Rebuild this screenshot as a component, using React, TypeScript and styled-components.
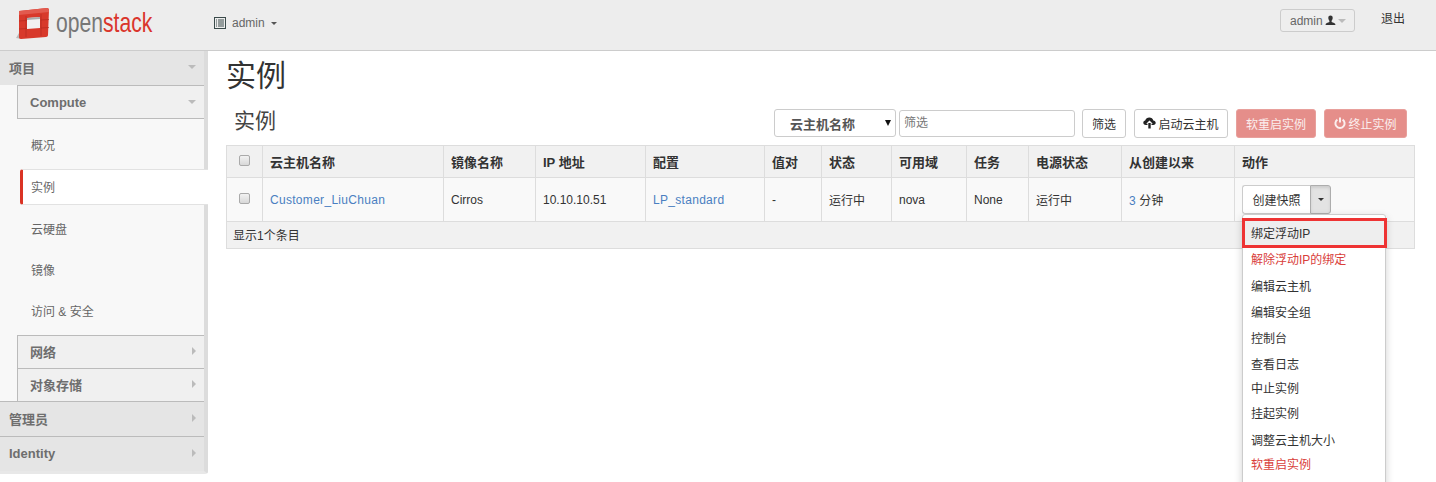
import React from 'react';
import styled, { createGlobalStyle } from 'styled-components';

const GlobalStyle = createGlobalStyle`
  html, body {
    margin: 0;
    height: 482px;
    overflow: hidden;
    background: #fff;
    font-family: 'Liberation Sans', 'Noto Sans CJK SC', sans-serif;
    font-size: 12px;
    color: #333;
  }
`;

const Page = styled.div`
  width: 1436px;
  height: 482px;
  overflow: hidden;
`;

const TopBar = styled.header`
  height: 50px;
  box-sizing: content-box;
  background: #ededed;
  border-bottom: 1px solid #ccc;
  display: flex;
  align-items: flex-start;
`;

const Logo = styled.div`
  display: flex;
  align-items: center;
  width: 214px;
  height: 46px;
  padding-left: 16px;
  box-sizing: border-box;
  gap: 6px;
`;

const LogoText = styled.span`
  font-size: 28px;
  color: #777;
  display: inline-block;
  width: 96px;
  white-space: nowrap;
  transform: scaleX(0.755);
  transform-origin: left center;
  span {
    color: #da352b;
  }
`;

const ProjectMenu = styled.div`
  display: flex;
  align-items: center;
  height: 46px;
  gap: 6px;
  color: #666;
  font-size: 12px;
  flex: 1;
`;

const Caret = styled.span<{ $color?: string; $size?: number }>`
  display: inline-block;
  width: 0;
  height: 0;
  border-left: ${({ $size }) => $size || 3}px solid transparent;
  border-right: ${({ $size }) => $size || 3}px solid transparent;
  border-top: ${({ $size }) => $size || 3}px solid ${({ $color }) => $color || '#555'};
`;

const UserButton = styled.div`
  width: 75px;
  height: 23px;
  box-sizing: border-box;
  margin-top: 9px;
  border: 1px solid #ccc;
  border-radius: 3px;
  background: #eee;
  display: flex;
  align-items: center;
  padding-left: 9px;
  gap: 2px;
  color: #666;
`;

const Logout = styled.a`
  width: 81px;
  padding: 9px 0 0 26px;
  box-sizing: border-box;
  color: #333;
  font-size: 12px;
`;

const Body = styled.div`
  display: flex;
  align-items: flex-start;
`;

const Sidebar = styled.aside`
  width: 208px;
  height: 423px;
  box-sizing: border-box;
  flex: none;
  border-right: 4px solid #dcdcdc;
  border-bottom: 3px solid #e8e8e8;
  border-bottom-right-radius: 3px;
  background: #f8f8f8;
`;

const PanelHeader = styled.div<{ $h: number; $top?: boolean }>`
  height: ${({ $h }) => $h}px;
  box-sizing: border-box;
  display: flex;
  align-items: center;
  justify-content: space-between;
  padding: 0 8px 2px 9px;
  background: #e5e5e5;
  font-size: 13px;
  font-weight: bold;
  color: #6e6e6e;
  border-top: ${({ $top }) => ($top ? '1px solid #bbb' : 'none')};
`;

const SubPanel = styled.div`
  margin-left: 17px;
`;

const SubHeader = styled.div<{ $h: number }>`
  height: ${({ $h }) => $h}px;
  box-sizing: border-box;
  display: flex;
  align-items: center;
  justify-content: space-between;
  padding: 0 8px 2px 12px;
  background: #f0f0f0;
  border-left: 1px solid #bbb;
  border-top: 1px solid #bbb;
  font-size: 13px;
  font-weight: bold;
  color: #6e6e6e;
`;

const SubHeaderOpen = styled(SubHeader)`
  padding-bottom: 0;
  border-bottom: 1px solid #bbb;
`;

const NavList = styled.ul`
  list-style: none;
  margin: 0;
  padding: 2px 0 3px;
`;

const NavItem = styled.li<{ $h: number; $active?: boolean }>`
  height: ${({ $h }) => $h}px;
  box-sizing: border-box;
  display: flex;
  align-items: center;
  padding: 0 0 2px 31px;
  color: #666;
  font-size: 12px;
  ${({ $active }) =>
    $active &&
    `
    margin: 0 -4px 4px 20px;
    padding-left: 8px;
    background: #fff;
    border-left: 3px solid #da3324;
    border-top: 1px solid #e2e2e2;
    border-bottom: 1px solid #e2e2e2;
    border-radius: 3px 0 0 3px;
    position: relative;
  `}
`;

const ArrowRight = styled.span`
  width: 0;
  height: 0;
  border-top: 4px solid transparent;
  border-bottom: 4px solid transparent;
  border-left: 4px solid #bbb;
`;

const Main = styled.main`
  flex: 1;
  padding: 0 21px 0 18px;
  min-width: 0;
`;

const Title = styled.h1`
  margin: 0;
  height: 48px;
  font-size: 30px;
  font-weight: normal;
  line-height: 50px;
  color: #333;
`;

const TableBar = styled.div`
  height: 46px;
  box-sizing: border-box;
  display: flex;
  align-items: center;
  padding: 2px 0 0 8px;
`;

const TableTitle = styled.h3`
  margin: 0 auto 8px 0;
  font-size: 21px;
  font-weight: normal;
  color: #444;
`;

const FilterSelect = styled.div`
  width: 122px;
  height: 28px;
  box-sizing: border-box;
  margin-right: 3px;
  border: 1px solid #ccc;
  border-radius: 3px;
  display: flex;
  align-items: center;
  justify-content: space-between;
  padding: 0 4px 0 15px;
  color: #555;
  font-size: 13px;
  font-weight: bold;
  background: #fff;
`;

const SelectArrow = styled.span`
  width: 0;
  height: 0;
  border-left: 3px solid transparent;
  border-right: 3px solid transparent;
  border-top: 6px solid #111;
`;

const FilterInput = styled.input`
  width: 176px;
  height: 27px;
  box-sizing: border-box;
  border: 1px solid #ccc;
  border-radius: 3px;
  padding: 0 4px;
  margin-right: 7px;
  font: inherit;
  &::placeholder {
    color: #777;
    opacity: 1;
  }
`;

const Button = styled.button<{ $danger?: boolean; $w: number; $mr?: number }>`
  width: ${({ $w }) => $w}px;
  height: 29px;
  box-sizing: border-box;
  margin-right: ${({ $mr }) => $mr || 0}px;
  border: 1px solid ${({ $danger }) => ($danger ? '#e8a09c' : '#ccc')};
  border-radius: 3px;
  background: ${({ $danger }) => ($danger ? '#e58e8a' : '#fff')};
  color: ${({ $danger }) => ($danger ? '#fbeeee' : '#333')};
  font: inherit;
  padding: 0;
  display: inline-flex;
  align-items: center;
  justify-content: center;
  gap: 2px;
`;

const Table = styled.table`
  width: 1188px;
  table-layout: fixed;
  border-collapse: collapse;
  background: #f9f9f9;
  th, td {
    border: 1px solid #ddd;
    padding: 0 7px;
    text-align: left;
    font-size: 12px;
    white-space: nowrap;
  }
  th {
    height: 32px;
    box-sizing: border-box;
    background: #f1f1f1;
    color: #333;
    font-size: 13px;
  }
  td {
    height: 44px;
    box-sizing: border-box;
    color: #333;
  }
  tfoot td {
    height: 27px;
    padding: 0 6px 2px;
    background: #f1f1f1;
  }
`;

const Check = styled.span`
  display: block;
  width: 11px;
  height: 11px;
  box-sizing: border-box;
  margin: -3px auto 0 5px;
  border: 1px solid #aaa;
  border-radius: 2px;
  background: linear-gradient(#f2f2f2, #d8d8d8);
`;

const TableLink = styled.a`
  color: #4a7fc1;
  letter-spacing: 0.3px;
`;

const ActionCell = styled.div`
  position: relative;
`;

const SplitButton = styled.div`
  display: flex;
  width: 89px;
  height: 29px;
`;

const SplitMain = styled.span`
  flex: 1;
  border: 1px solid #ccc;
  border-right: none;
  border-radius: 3px 0 0 3px;
  background: #fff;
  display: flex;
  align-items: center;
  justify-content: center;
`;

const SplitToggle = styled.span`
  width: 21px;
  box-sizing: border-box;
  border: 1px solid #adadad;
  border-radius: 0 3px 3px 0;
  background: #e3e3e3;
  box-shadow: inset 0 2px 3px rgba(0, 0, 0, 0.1);
  display: flex;
  align-items: center;
  justify-content: center;
`;

const Menu = styled.ul`
  position: absolute;
  top: 29px;
  left: 0;
  z-index: 5;
  width: 144px;
  box-sizing: border-box;
  list-style: none;
  margin: 0;
  padding: 3px 0 40px;
  background: #fff;
  border: 1px solid #ccc;
  border-radius: 3px;
  box-shadow: 0 3px 8px rgba(0, 0, 0, 0.18);
`;

const MenuItem = styled.li<{ $gap?: number; $danger?: boolean }>`
  height: 20px;
  margin-top: ${({ $gap }) => $gap || 0}px;
  display: flex;
  align-items: center;
  padding-left: 8px;
  color: ${({ $danger }) => ($danger ? '#d9403a' : '#333')};
`;

const HighlightItem = styled.li`
  height: 30px;
  margin: 0 -2px 0 -1px;
  box-sizing: border-box;
  display: flex;
  align-items: center;
  border: 3px solid #ee3333;
  padding: 0 0 2px 6px;
  background: #eee;
`;

const ListIcon = () => (
  <svg width="12" height="12" viewBox="0 0 12 12" fill="none" stroke="#3a4a4a" strokeWidth="1">
    <rect x="0.5" y="0.5" width="11" height="11" />
    <path d="M2 3h1M4 3h6M2 5h1M4 5h6M2 7h1M4 7h6M2 9h1M4 9h6" />
  </svg>
);

const LogoMark = () => (
  <svg width="34" height="31" viewBox="0 0 34 31">
    <path d="M0 30 6 20v11z" fill="#bbb" />
    <path d="M3 3 31 0c1.500 0 2 1 2 2l-1 25c0 1-1 2-2 2L5 31c-1.500 0-2-1-2-2z" fill="#d8392b" />
    <path d="M3 3 31 0c1.500 0 2 1 2 2v2L3 7z" fill="#e25a4e" />
    <path d="M10 8v21M25 6v22M3 13l8-.5M25 12l8-.5M3 21l8-.5M25 20l8-.5" stroke="#b52a20" strokeWidth="0.7" fill="none" />
    <path d="M11 10 24 9v11l-13 1z" fill="#f2f2f2" />
    <path d="M11 10 24 9v2l-13 1z" fill="#aaa" />
  </svg>
);

const UserIcon = () => (
  <svg width="11" height="11" viewBox="0 0 11 11" fill="#333">
    <path d="M3.300 2.800C3.300 1.300 4.300.5 5.500.5s2.200.8 2.200 2.300c0 1.300-.6 2.400-1.100 3v1.100c1.500.6 3.900 1 3.900 3.100H.5c0-2.100 2.400-2.500 3.900-3.100V5.800c-.5-.6-1.100-1.700-1.100-3z" />
  </svg>
);

const CloudUpIcon = () => (
  <svg width="13" height="12" viewBox="0 0 13 12" fill="#222">
    <path d="M3 8C1 8 .3 6.700.3 5.700.3 4.500 1.200 3.600 2.200 3.500 2.700 1.700 4.400.5 6.300.5c2 0 3.600 1.200 4 3 1.300.2 2.400 1.100 2.400 2.300C12.700 7.100 11.800 8 10.400 8H8.500V6.800h1.300L6.500 3.400 3.200 6.800h1.300V8z" />
    <rect x="5.300" y="6" width="2.400" height="5.500" />
  </svg>
);

const PowerIcon = () => (
  <svg width="12" height="12" viewBox="0 0 12 12" fill="none" stroke="#fbeeee" strokeWidth="2">
    <path d="M3.400 2.600a4.600 4.600 0 1 0 5.200 0" />
    <path d="M6 .5v5" />
  </svg>
);

const menuItems = [
  { label: '解除浮动IP的绑定', gap: 0, danger: true },
  { label: '编辑云主机', gap: 7 },
  { label: '编辑安全组', gap: 6 },
  { label: '控制台', gap: 6 },
  { label: '查看日志', gap: 6 },
  { label: '中止实例', gap: 4 },
  { label: '挂起实例', gap: 5 },
  { label: '调整云主机大小', gap: 7 },
  { label: '软重启实例', gap: 4, danger: true },
];

const App = () => (
  <Page>
    <GlobalStyle />
    <TopBar>
      <Logo>
        <LogoMark />
        <LogoText>
          open<span>stack</span>
        </LogoText>
      </Logo>
      <ProjectMenu>
        <ListIcon />
        admin
        <Caret />
      </ProjectMenu>
      <UserButton>
        admin
        <UserIcon />
        <Caret $color="#bbb" $size={4} />
      </UserButton>
      <Logout>退出</Logout>
    </TopBar>
    <Body>
      <Sidebar>
        <PanelHeader $h={34}>
          项目
          <Caret $color="#bbb" $size={4} />
        </PanelHeader>
        <SubPanel>
          <SubHeaderOpen $h={34}>
            Compute
            <Caret $color="#bbb" $size={4} />
          </SubHeaderOpen>
        </SubPanel>
        <NavList>
          <NavItem $h={48}>概况</NavItem>
          <NavItem $h={36} $active>实例</NavItem>
          <NavItem $h={41}>云硬盘</NavItem>
          <NavItem $h={41}>镜像</NavItem>
          <NavItem $h={41}>访问 &amp; 安全</NavItem>
        </NavList>
        <SubPanel>
          <SubHeader $h={33}>
            网络
            <ArrowRight />
          </SubHeader>
          <SubHeader $h={33}>
            对象存储
            <ArrowRight />
          </SubHeader>
        </SubPanel>
        <PanelHeader $h={35} $top>
          管理员
          <ArrowRight />
        </PanelHeader>
        <PanelHeader $h={35} $top>
          Identity
          <ArrowRight />
        </PanelHeader>
      </Sidebar>
      <Main>
        <Title>实例</Title>
        <TableBar>
          <TableTitle>实例</TableTitle>
          <FilterSelect>
            云主机名称
            <SelectArrow />
          </FilterSelect>
          <FilterInput placeholder="筛选" />
          <Button $w={44} $mr={8}>筛选</Button>
          <Button $w={94} $mr={8}>
            <CloudUpIcon />
            启动云主机
          </Button>
          <Button $w={80} $danger $mr={8}>软重启实例</Button>
          <Button $w={83} $danger $mr={8}>
            <PowerIcon />
            终止实例
          </Button>
        </TableBar>
        <Table>
          <colgroup>
            <col width="36" />
            <col width="181" />
            <col width="92" />
            <col width="110" />
            <col width="119" />
            <col width="57" />
            <col width="70" />
            <col width="75" />
            <col width="62" />
            <col width="93" />
            <col width="113" />
            <col width="180" />
          </colgroup>
          <thead>
            <tr>
              <th><Check /></th>
              <th>云主机名称</th>
              <th>镜像名称</th>
              <th>IP 地址</th>
              <th>配置</th>
              <th>值对</th>
              <th>状态</th>
              <th>可用域</th>
              <th>任务</th>
              <th>电源状态</th>
              <th>从创建以来</th>
              <th>动作</th>
            </tr>
          </thead>
          <tbody>
            <tr>
              <td><Check /></td>
              <td><TableLink>Customer_LiuChuan</TableLink></td>
              <td>Cirros</td>
              <td>10.10.10.51</td>
              <td><TableLink>LP_standard</TableLink></td>
              <td>-</td>
              <td>运行中</td>
              <td>nova</td>
              <td>None</td>
              <td>运行中</td>
              <td><TableLink>3</TableLink> 分钟</td>
              <td>
                <ActionCell>
                  <SplitButton>
                    <SplitMain>创建快照</SplitMain>
                    <SplitToggle><Caret $color="#333" /></SplitToggle>
                  </SplitButton>
                  <Menu>
                    <HighlightItem>绑定浮动IP</HighlightItem>
                    {menuItems.map((item) => (
                      <MenuItem key={item.label} $gap={item.gap} $danger={item.danger}>
                        {item.label}
                      </MenuItem>
                    ))}
                  </Menu>
                </ActionCell>
              </td>
            </tr>
          </tbody>
          <tfoot>
            <tr>
              <td colSpan={12}>显示1个条目</td>
            </tr>
          </tfoot>
        </Table>
      </Main>
    </Body>
  </Page>
);

export default App;
